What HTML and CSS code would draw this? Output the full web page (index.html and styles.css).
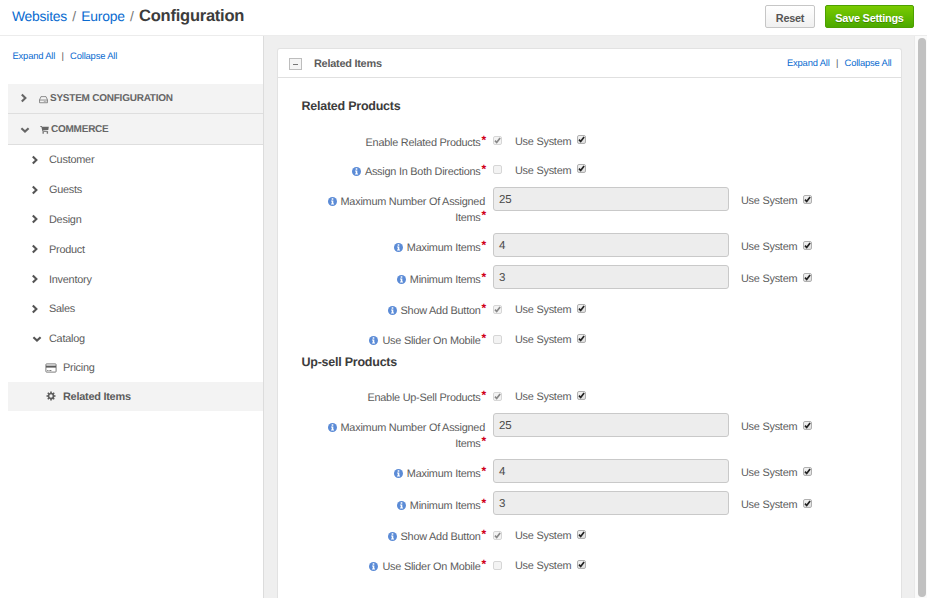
FILE: index.html
```html
<!DOCTYPE html>
<html lang="en">
<head>
<meta charset="utf-8">
<title>Configuration</title>
<link rel="stylesheet" href="styles.css">
</head>
<body>
<svg class="defs" aria-hidden="true">
  <symbol id="right" viewBox="0 0 10 10"><path d="M2.8 1.4 6.4 5 2.8 8.6" fill="none" stroke="currentColor" stroke-width="2.1"/></symbol>
  <symbol id="down" viewBox="0 0 10 10"><path d="M1.4 3.2 5 6.6 8.6 3.2" fill="none" stroke="currentColor" stroke-width="2.1"/></symbol>
  <symbol id="info" viewBox="0 0 10 10"><circle cx="5" cy="5" r="5" fill="#5b8bd6"/><path d="M4.1 1.5h1.8v1.5H4.1zM3.4 4h2.5v3.2h.8v1.2H3.4V7.2h.8V5.1h-.8z" fill="#fff"/></symbol>
  <symbol id="tick" viewBox="0 0 9 9"><path d="M2 4.6 3.7 6.5 7.1 1.9" fill="none" stroke="currentColor" stroke-width="1.7"/></symbol>
</svg>

<header class="topbar">
  <div class="crumbs"><a>Websites</a><i>/</i><a>Europe</a><i>/</i><h1>Configuration</h1></div>
  <div class="actions"><button class="btn">Reset</button><button class="btn save">Save Settings</button></div>
</header>

<div class="page">
  <nav class="sidebar">
    <div class="toggles"><a>Expand All</a><span>|</span><a>Collapse All</a></div>
    <div class="group"><svg class="arrow"><use href="#right"/></svg>
      <svg class="gicon" viewBox="0 0 10 10"><path d="M.6 5.4 2.2 1.8h5.6l1.6 3.6v3.2H.6zM.6 5.6h8.8M5.4 7.2h.9M7.2 7.2h.9" fill="none" stroke="currentColor" stroke-width=".8"/></svg>SYSTEM CONFIGURATION</div>
    <div class="group"><svg class="arrow low"><use href="#down"/></svg>
      <svg class="gicon cart" viewBox="0 0 10 10"><path d="M.2 1h1.9l.3 1H9.8L9.2 5.6 3.4 6.2l.1.6H9v.8H2.8L1.5 1.9H.2z" fill="currentColor"/><circle cx="3.5" cy="8.8" r=".9" fill="currentColor"/><circle cx="8.2" cy="8.8" r=".9" fill="currentColor"/></svg>COMMERCE</div>
    <div class="item"><svg class="arrow"><use href="#right"/></svg>Customer</div>
    <div class="item"><svg class="arrow"><use href="#right"/></svg>Guests</div>
    <div class="item"><svg class="arrow"><use href="#right"/></svg>Design</div>
    <div class="item"><svg class="arrow"><use href="#right"/></svg>Product</div>
    <div class="item"><svg class="arrow"><use href="#right"/></svg>Inventory</div>
    <div class="item"><svg class="arrow"><use href="#right"/></svg>Sales</div>
    <div class="item"><svg class="arrow low"><use href="#down"/></svg>Catalog</div>
    <div class="leaf"><svg viewBox="0 0 12 10"><rect x=".9" y=".9" width="10.2" height="8.2" rx=".7" fill="none" stroke="currentColor" stroke-width=".8"/><path d="M1 2.6h10v2H1z" fill="currentColor"/><path d="M2.2 7.5h1.3M4.4 7.5h2" stroke="currentColor" stroke-width=".8"/></svg>Pricing</div>
    <div class="leaf active"><svg viewBox="0 0 12 10"><circle cx="6" cy="5" r="2.5" fill="none" stroke="currentColor" stroke-width="1.7"/><path d="M6 .5v1.6M6 7.9v1.6M1.5 5h1.6M8.9 5h1.6M2.8 1.8l1.2 1.2M8 7l1.2 1.2M2.8 8.2 4 7M8 3l1.2-1.2" stroke="currentColor" stroke-width="1.6"/></svg>Related Items</div>
  </nav>

  <main class="content">
    <section class="panel">
      <div class="panel-head"><span class="collapse"></span><h2>Related Items</h2>
        <div class="toggles"><a>Expand All</a><span>|</span><a>Collapse All</a></div></div>
      <div class="form">
        <h3>Related Products</h3>
        <div class="row check"><label>Enable Related Products<b>*</b></label><span class="box off"><svg><use href="#tick"/></svg></span><span class="sys">Use System</span><span class="box on"><svg><use href="#tick"/></svg></span></div>
        <div class="row check second"><label><svg class="info"><use href="#info"/></svg>Assign In Both Directions<b>*</b></label><span class="box off"></span><span class="sys">Use System</span><span class="box on"><svg><use href="#tick"/></svg></span></div>
        <div class="row tall"><label><span class="line"><svg class="info"><use href="#info"/></svg>Maximum Number Of Assigned</span><br>Items<b>*</b></label><span class="field">25</span><span class="sys">Use System</span><span class="box on"><svg><use href="#tick"/></svg></span></div>
        <div class="row"><label><svg class="info"><use href="#info"/></svg>Maximum Items<b>*</b></label><span class="field">4</span><span class="sys">Use System</span><span class="box on"><svg><use href="#tick"/></svg></span></div>
        <div class="row last"><label><svg class="info"><use href="#info"/></svg>Minimum Items<b>*</b></label><span class="field">3</span><span class="sys">Use System</span><span class="box on"><svg><use href="#tick"/></svg></span></div>
        <div class="row check drop"><label><svg class="info"><use href="#info"/></svg>Show Add Button<b>*</b></label><span class="box off"><svg><use href="#tick"/></svg></span><span class="sys">Use System</span><span class="box on"><svg><use href="#tick"/></svg></span></div>
        <div class="row check drop end"><label><svg class="info"><use href="#info"/></svg>Use Slider On Mobile<b>*</b></label><span class="box off"></span><span class="sys">Use System</span><span class="box on"><svg><use href="#tick"/></svg></span></div>

        <h3 class="next">Up-sell Products</h3>
        <div class="row check second drop"><label>Enable Up-Sell Products<b>*</b></label><span class="box off"><svg><use href="#tick"/></svg></span><span class="sys">Use System</span><span class="box on"><svg><use href="#tick"/></svg></span></div>
        <div class="row tall"><label><span class="line"><svg class="info"><use href="#info"/></svg>Maximum Number Of Assigned</span><br>Items<b>*</b></label><span class="field">25</span><span class="sys">Use System</span><span class="box on"><svg><use href="#tick"/></svg></span></div>
        <div class="row"><label><svg class="info"><use href="#info"/></svg>Maximum Items<b>*</b></label><span class="field">4</span><span class="sys">Use System</span><span class="box on"><svg><use href="#tick"/></svg></span></div>
        <div class="row last"><label><svg class="info"><use href="#info"/></svg>Minimum Items<b>*</b></label><span class="field">3</span><span class="sys">Use System</span><span class="box on"><svg><use href="#tick"/></svg></span></div>
        <div class="row check drop"><label><svg class="info"><use href="#info"/></svg>Show Add Button<b>*</b></label><span class="box off"><svg><use href="#tick"/></svg></span><span class="sys">Use System</span><span class="box on"><svg><use href="#tick"/></svg></span></div>
        <div class="row check drop end"><label><svg class="info"><use href="#info"/></svg>Use Slider On Mobile<b>*</b></label><span class="box off"></span><span class="sys">Use System</span><span class="box on"><svg><use href="#tick"/></svg></span></div>
      </div>
    </section>
  </main>
  <div class="scroll"><div class="thumb"></div></div>
</div>
</body>
</html>
```
FILE: styles.css
```css
* { box-sizing: border-box; }
body {
  margin: 0;
  width: 927px;
  height: 598px;
  overflow: hidden;
  display: flex;
  flex-direction: column;
  background: #fff;
  color: #5c5c5c;
  font: 10.9px/16px "Liberation Sans", Arial, sans-serif;
  letter-spacing: -.24px;
  text-rendering: geometricPrecision;
}
svg { display: block; flex: none; }
.defs { width: 0; height: 0; position: absolute; }
a { color: #0a6bd0; }
h1, h2, h3 { margin: 0; }

.topbar {
  height: 36px;
  flex: none;
  display: flex;
  justify-content: space-between;
  padding: 5px 13px 0 12px;
  border-bottom: 1px solid #ececec;
}
.crumbs { display: flex; align-items: baseline; font-size: 13.9px; line-height: 22px; }
.crumbs i { width: 14.4px; text-align: center; font-style: normal; color: #777; }
.crumbs h1 { font-size: 16.5px; line-height: 22px; color: #3c3c3c; }
.actions { display: flex; gap: 10px; }
.btn {
  height: 23px;
  width: 50px;
  padding: 2px 0 0;
  border: 1px solid #c6c6c6;
  border-radius: 2px;
  background: linear-gradient(#fff, #f0f0f0);
  color: #555;
  font: bold 10.9px "Liberation Sans", Arial, sans-serif;
  letter-spacing: -.24px;
}
.save {
  width: 89px;
  border-color: #4da000;
  background: linear-gradient(#7acb00, #4ba900);
  color: #fff;
  text-shadow: 0 1px 0 #3e8800;
}

.page { flex: 1; min-height: 0; display: flex; }
.sidebar { width: 264px; flex: none; padding: 12px 0 0 8px; border-right: 1px solid #dcdcdc; }
.toggles { display: flex; font-size: 9.4px; letter-spacing: -.17px; line-height: 16px; }
.toggles span { width: 15px; text-align: center; color: #555; }
.sidebar .toggles { padding-left: 4.5px; margin-bottom: 20px; }
.group {
  height: 30px;
  display: flex;
  align-items: center;
  padding-left: 11px;
  background: #f3f3f3;
  border-bottom: 1px solid #dedede;
  font-size: 10px;
  font-weight: bold;
  color: #666;
}
.group + .group { height: 31px; padding-top: 1px; }
.arrow { width: 10px; height: 10px; margin-top: -1px; }
.gicon { width: 9px; height: 9px; margin: 1px 2px 0 10px; }
.group .low { margin: 0 1px 0 1px; }
.group .cart { margin: 0 2px 0 9px; }
.item { height: 29.8px; display: flex; align-items: center; padding: 1px 0 0 22px; }
.item .arrow { margin: -1px 9px 0 0; color: #555; }
.item .low { margin: 0 7px 0 2px; }
.leaf { height: 28.4px; display: flex; align-items: center; padding: 1px 0 0 37px; }
.leaf svg { width: 12px; height: 10px; margin: -1px 6px 0 0; }
.active { height: 29px; background: #f3f3f3; font-weight: bold; }

.content { flex: 1; background: #efefef; padding: 12px 12px 0 13px; }
.panel { height: 100%; background: #fff; border: 1px solid #e2e2e2; border-bottom: 0; border-radius: 3px 3px 0 0; }
.panel-head { height: 29px; display: flex; align-items: center; padding: 0 9.5px 0 11px; border-bottom: 1px solid #e0e0e0; }
.collapse {
  width: 13px;
  height: 12px;
  margin: 2px 12px 0 0;
  border: 1px solid #bdbdbd;
  background: linear-gradient(#777, #777) center / 5px 1px no-repeat, #f5f5f5;
}
.panel-head h2 { flex: 1; font-size: 10.9px; line-height: 16px; margin-top: 1px; }
.form { padding: 18px 0 0 23.5px; }
.form h3 { height: 31px; font-size: 12.5px; line-height: 21px; color: #3c3c3c; }
.form .next { height: 30px; }

.row { height: 32px; display: flex; align-items: flex-start; }
.row label { width: 184.5px; margin-right: 7px; text-align: right; padding-top: 7px; flex: none; white-space: nowrap; }
.row label b { color: #d0021b; font-size: 12px; line-height: 10px; margin-left: 1px; vertical-align: 2px; }
.line { margin-right: 1px; }
.row.check { height: 29px; }
.row.check label { padding-top: 8px; }
.row.second { height: 31px; }
.row.tall { height: 46px; }
.row.last { height: 30px; }
.row.end { height: 28px; padding-top: 1px; }
.info { display: inline-block; width: 9px; height: 9px; margin-right: 4px; vertical-align: -1px; }
.field {
  width: 236px;
  height: 24px;
  padding: 0 5px;
  border: 1px solid #c9c9c9;
  border-radius: 3px;
  background: #ededed;
  font-size: 11.5px;
  line-height: 24px;
  color: #4a4a4a;
}
.sys { width: 62px; margin-left: 12px; padding-top: 6px; white-space: nowrap; }
.check .sys { padding-top: 7px; margin-left: 13px; }
.box {
  width: 9px;
  height: 9px;
  margin-top: 8px;
  border: 1px solid #b0b0b0;
  border-radius: 2px;
  background: linear-gradient(#f2f2f2, #dedede);
  color: #222;
}
.box svg { width: 9px; height: 9px; margin: -1px; overflow: visible; }
.box.off { margin-top: 9px; border-color: #d6d6d6; background: #f3f3f3; color: #888; }
.drop .box { margin-top: 9px; }
.drop .box.off { margin-top: 10px; }

.scroll { width: 13px; flex: none; background: #fafafa; border-left: 1px solid #e9e9e9; padding: 2px 1px 1px 3px; }
.thumb { width: 8px; height: 100%; border-radius: 4px; background: #c1c1c1; }
```
